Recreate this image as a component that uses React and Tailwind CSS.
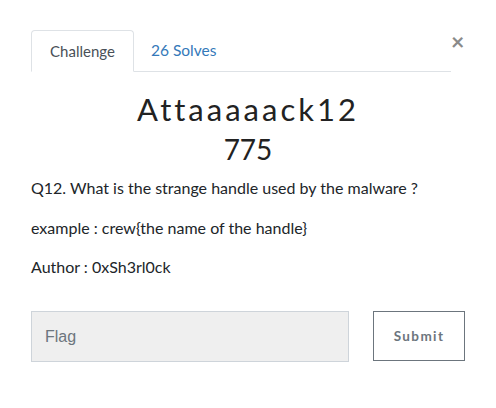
import React from "react";

export default function App() {
  return (
    <div className="relative w-[496px] h-[408px] bg-white text-[#212529] font-['Lato','Noto_Sans',sans-serif]">
      {/* close */}
      <button className="absolute left-[451px] top-[30px] text-[#8a8a8a] text-[23px] font-bold leading-none">
        ×
      </button>

      {/* tabs */}
      <div className="pt-[30px] pl-[31px]">
        <ul className="flex w-[420px] border-b border-[#dee2e6] text-[15px]">
          <li className="-mb-px h-[42px] w-[103px] flex items-center justify-center rounded-t border border-[#dee2e6] border-b-white bg-white text-[#495057]">
            Challenge
          </li>
          <li className="h-[41px] px-[17px] flex items-center text-[15.5px] text-[#3479b9]">26 Solves</li>
        </ul>
      </div>

      {/* title */}
      <div className="mt-[17px] text-center">
        <h2 className="text-[31px] leading-[40px] tracking-[3px] text-[#222]">Attaaaaack12</h2>
        <h3 className="text-[28px] leading-[40px] text-[#222]">775</h3>
      </div>

      {/* description */}
      <div className="pl-[31px] mt-[7px] text-[16px] leading-[24px]">
        <p className="mb-4">Q12. What is the strange handle used by the malware ?</p>
        <p className="mb-[15px]">example : crew{"{"}the name of the handle{"}"}</p>
        <p>Author : 0xSh3rl0ck</p>
      </div>

      {/* flag form */}
      <div className="flex items-start pl-[31px] mt-[32px]">
        <input
          placeholder="Flag"
          className="w-[318px] h-[51px] border border-[#ced4da] bg-[#efefef] px-[13px] font-['Liberation_Sans',sans-serif] text-[16px] placeholder:text-[#6c757d] outline-none"
        />
        <button className="ml-[24px] w-[92px] h-[50px] border border-[#6c757d] text-[#6c757d] text-[13.5px] font-bold tracking-[1.4px]">
          Submit
        </button>
      </div>
    </div>
  );
}
